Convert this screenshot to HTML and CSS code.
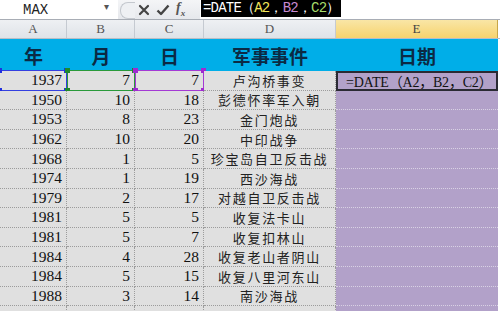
FILE: index.html
```html
<!DOCTYPE html>
<html>
<head>
<meta charset="utf-8">
<link rel="stylesheet" href="styles.css">
</head>
<body>
<div class="app">
  <div class="fbar">
    <div class="namebox"><span class="name">MAX</span><span class="caret">▾</span></div>
    <div class="fctrl">
      <span class="pill"></span>
      <svg class="ic" width="12" height="12" viewBox="0 0 12 12"><path d="M2 2 L10 10 M10 2 L2 10" stroke="#444" stroke-width="2.2" stroke-linecap="round"/></svg>
      <svg class="ic" width="14" height="12" viewBox="0 0 14 12"><path d="M1.5 6.5 L5 10 L12.5 1.5" stroke="#444" stroke-width="2.4" fill="none" stroke-linejoin="round"/></svg>
      <span class="fx">f<sub>x</sub></span>
    </div>
    <div class="finput"><span class="ftext">=DATE（<span class="ya">A2</span>，<span class="pb">B2</span>，<span class="gc">C2</span>）</span></div>
  </div>
  <div class="grid colhdr">
    <div class="ch">A</div><div class="ch">B</div><div class="ch">C</div><div class="ch">D</div><div class="ch chsel">E</div><div class="chx"></div>
  </div>
  <div class="grid hdr">
    <div class="h">年</div><div class="h">月</div><div class="h">日</div><div class="h">军事事件</div><div class="h">日期</div><div class="hx"></div>
  </div>
  <div class="grid row">
    <div class="c n">1937<span class="sel sb"><i class="k tl"></i><i class="k tr"></i><i class="k bl"></i><i class="k br"></i></span></div>
    <div class="c n">7<span class="sel sg"><i class="k tl"></i><i class="k tr"></i><i class="k bl"></i><i class="k br"></i></span></div>
    <div class="c n">7<span class="sel sp"><i class="k tl"></i><i class="k tr"></i><i class="k bl"></i><i class="k br"></i></span></div>
    <div class="c t">卢沟桥事变</div>
    <div class="e act">=DATE（A2，B2，C2）</div><div class="x"></div>
  </div>
  <div class="grid row"><div class="c n">1950</div><div class="c n">10</div><div class="c n">18</div><div class="c t">彭德怀率军入朝</div><div class="e"></div><div class="x"></div></div>
  <div class="grid row"><div class="c n">1953</div><div class="c n">8</div><div class="c n">23</div><div class="c t">金门炮战</div><div class="e"></div><div class="x"></div></div>
  <div class="grid row"><div class="c n">1962</div><div class="c n">10</div><div class="c n">20</div><div class="c t">中印战争</div><div class="e"></div><div class="x"></div></div>
  <div class="grid row"><div class="c n">1968</div><div class="c n">1</div><div class="c n">5</div><div class="c t">珍宝岛自卫反击战</div><div class="e"></div><div class="x"></div></div>
  <div class="grid row"><div class="c n">1974</div><div class="c n">1</div><div class="c n">19</div><div class="c t">西沙海战</div><div class="e"></div><div class="x"></div></div>
  <div class="grid row"><div class="c n">1979</div><div class="c n">2</div><div class="c n">17</div><div class="c t">对越自卫反击战</div><div class="e"></div><div class="x"></div></div>
  <div class="grid row"><div class="c n">1981</div><div class="c n">5</div><div class="c n">5</div><div class="c t">收复法卡山</div><div class="e"></div><div class="x"></div></div>
  <div class="grid row"><div class="c n">1981</div><div class="c n">5</div><div class="c n">7</div><div class="c t">收复扣林山</div><div class="e"></div><div class="x"></div></div>
  <div class="grid row"><div class="c n">1984</div><div class="c n">4</div><div class="c n">28</div><div class="c t">收复老山者阴山</div><div class="e"></div><div class="x"></div></div>
  <div class="grid row"><div class="c n">1984</div><div class="c n">5</div><div class="c n">15</div><div class="c t">收复八里河东山</div><div class="e"></div><div class="x"></div></div>
  <div class="grid row"><div class="c n">1988</div><div class="c n">3</div><div class="c n">14</div><div class="c t">南沙海战</div><div class="e"></div><div class="x"></div></div>
  <div class="grid row"><div class="c n"></div><div class="c n"></div><div class="c n"></div><div class="c t"></div><div class="e"></div><div class="x"></div></div>
</div>
</body>
</html>
```
FILE: styles.css
```css
html, body { margin: 0; padding: 0; background: #fff; }
.app { width: 500px; height: 311px; overflow: hidden; font-family: "Liberation Serif", serif; }

.fbar { display: flex; height: 19px; border-bottom: 1px solid #a8adb5; background: #fff; }
.namebox { width: 118px; display: flex; align-items: center; position: relative; }
.name { font-family: "Liberation Mono", monospace; font-size: 14px; color: #222; margin-left: 23px; transform: scaleY(1.1); }
.caret { position: absolute; left: 104px; top: 1px; font-size: 10px; color: #555; }
.fctrl { width: 82px; display: flex; align-items: center; gap: 6px; background: linear-gradient(#f4f5f7, #e6e8ec); position: relative; padding-left: 20px; box-sizing: border-box; }
.pill { position: absolute; left: 2px; top: 2px; width: 14px; height: 15px; border-radius: 8px 0 0 8px; border: 1px solid #c4c8ce; border-right: none; background: #eef0f3; }
.ic { display: block; }
.fx { font-family: "Liberation Serif", serif; font-style: italic; font-weight: bold; font-size: 14px; color: #555; line-height: 1; }
.fx sub { font-size: 9px; }
.finput { flex: 1; display: flex; align-items: flex-start; padding-left: 1px; }
.ftext { background: #000; color: #fff; font-family: "Liberation Mono", monospace; font-size: 14px; height: 17px; line-height: 17px; padding: 0 2px; letter-spacing: -0.8px; white-space: nowrap; }
.ya { color: #f1e65a; }
.pb { color: #c88ad0; }
.gc { color: #a6dc6a; }

.grid { display: grid; grid-template-columns: 67px 68px 69px 132px 162px 2px; grid-template-rows: 100%; }
.grid > div { min-width: 0; min-height: 0; }
.colhdr { height: 18px; background: linear-gradient(#eef0f3, #dfe3e8); border-bottom: 1px solid #b9bec6; }
.ch { display: flex; align-items: center; justify-content: center; font-size: 13px; color: #555; border-right: 1px solid #c5cad1; }
.chsel { background: linear-gradient(#f9e6a6, #f7d36e); color: #444; border-right: 1px solid #c8a648; }
.chx { background: #fff; }

.hdr { height: 32px; background: #00aee8; }
.h { display: flex; align-items: center; justify-content: center; font-family: "Noto Sans CJK SC", sans-serif; font-weight: bold; font-size: 19px; color: #0b2a44; }
.hx { background: #fff; }

.row { height: 19.6px; }
.c { position: relative; background: #e0e0e0; border-right: 1px dotted #9c9c9c; border-bottom: 1px dotted #9c9c9c; box-sizing: border-box; display: flex; align-items: center; font-size: 15.5px; color: #111; white-space: nowrap; }
.n { justify-content: flex-end; padding-right: 4px; }
.t { justify-content: center; font-family: "Noto Sans CJK SC", sans-serif; font-size: 13px; letter-spacing: 1.7px; color: #222; overflow: hidden; }
.e { background: #b2a1c9; border-bottom: 1px dotted #d9d2e4; box-sizing: border-box; display: flex; align-items: center; white-space: nowrap; overflow: hidden; }
.act { border: 2px solid #2a2a33; padding-left: 8px; font-size: 14px; letter-spacing: -0.2px; color: #111; font-family: "Liberation Serif", "Noto Sans CJK SC", serif; }
.x { background: #fff; }

.sel { position: absolute; left: -1px; top: -1px; right: -1px; bottom: -1px; border: 1.5px solid; }
.sb { border-color: #3440e0; }
.sg { border-color: #2a9a3a; left: 0; }
.sp { border-color: #a43ad4; left: 0; }
.k { position: absolute; width: 5px; height: 5px; }
.sb .k { background: #2030e0; }
.sg .k { background: #1f8a2a; }
.sp .k { background: #a02ad0; }
.tl { left: -3px; top: -3px; }
.tr { right: -3px; top: -3px; }
.bl { left: -3px; bottom: -3px; }
.br { right: -3px; bottom: -3px; }
```
